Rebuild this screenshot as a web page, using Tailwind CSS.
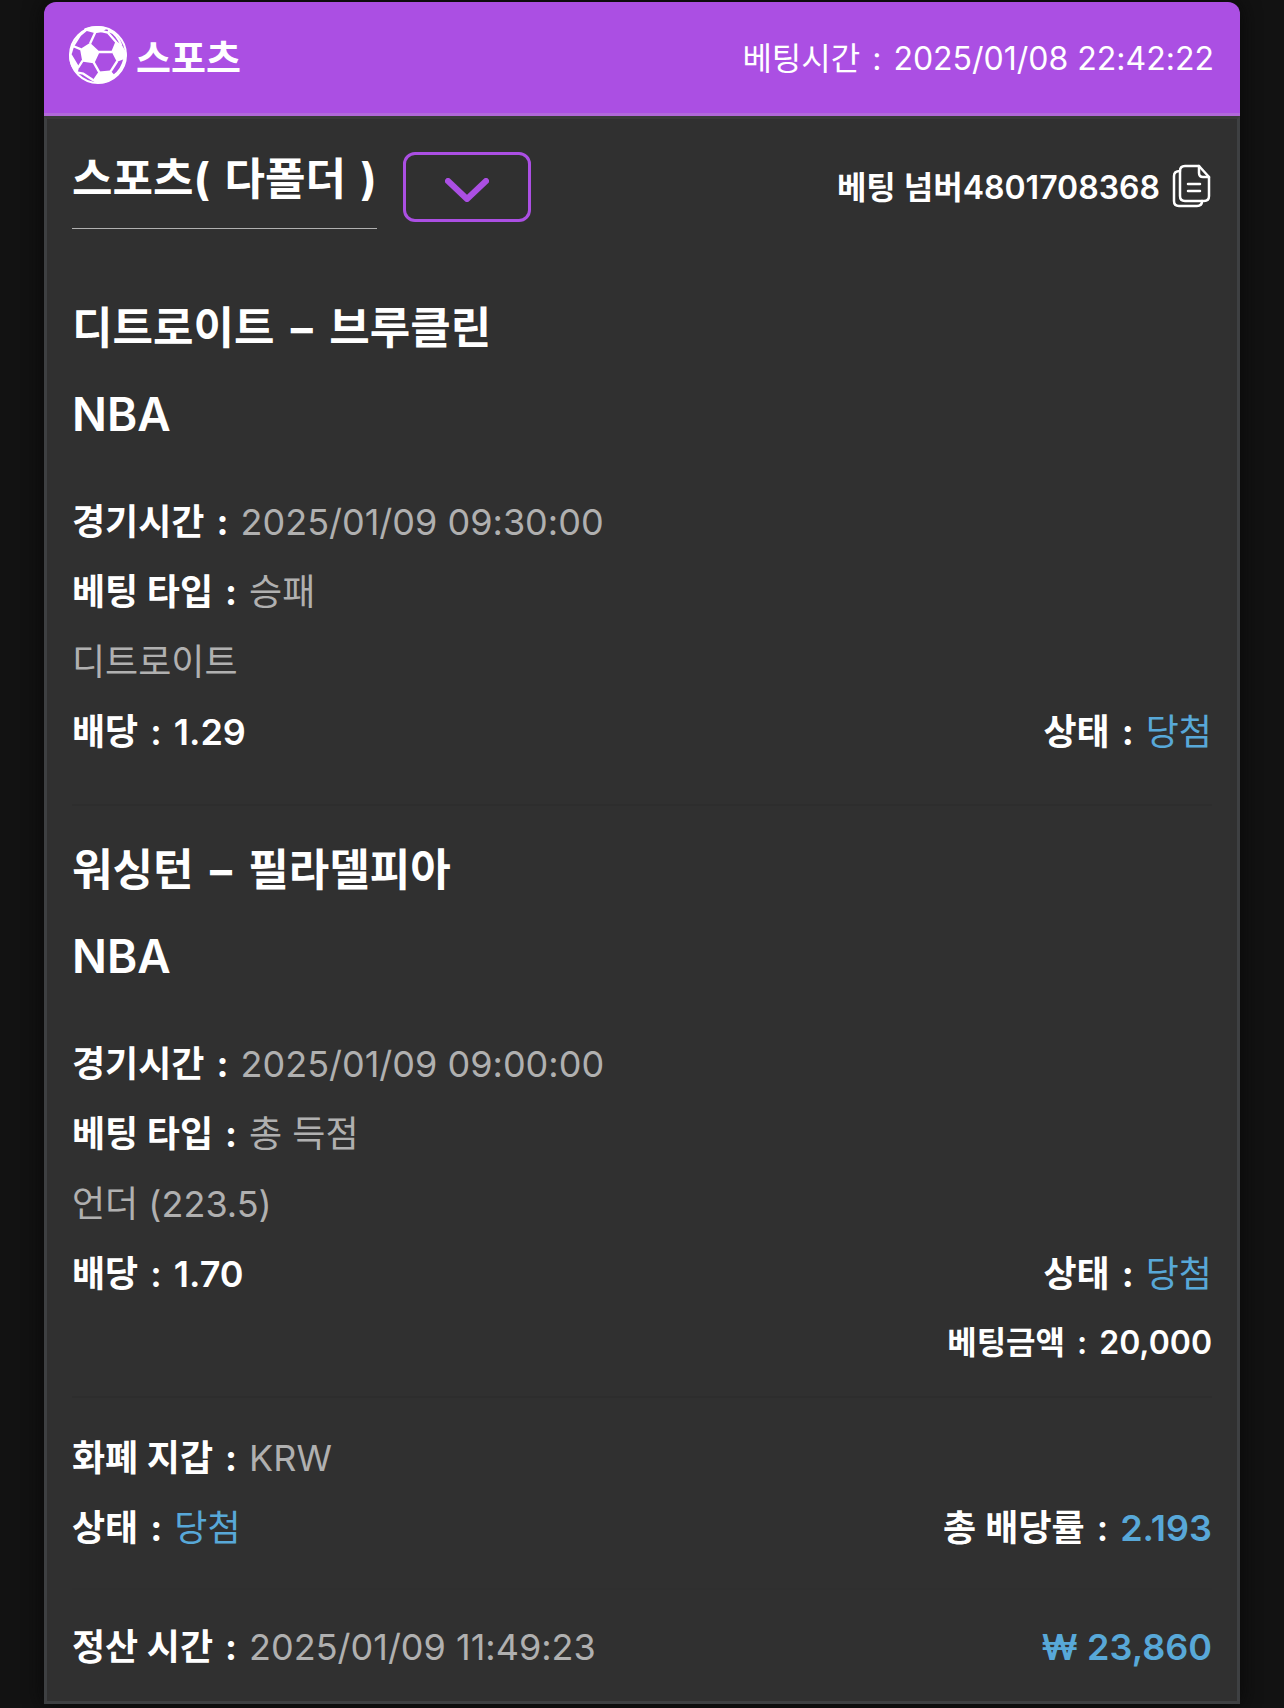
<!DOCTYPE html>
<html lang="ko">

<head>
    <meta charset="UTF-8">
    <meta name="viewport" content="width=device-width, initial-scale=1.0">
    <title>베팅 내역</title>
    <script src="https://cdn.jsdelivr.net/npm/@tailwindcss/browser@4"></script>
</head>

<body class="bg-[#121212] text-white font-['Inter','Noto_Sans_CJK_KR',sans-serif]">

    <main class="px-11 pt-[2px] pb-1">
        <article class="rounded-t-xl shadow-[0_0_20px_#080808]">
            <!-- Header -->
            <header class="flex items-center justify-between h-[114px] pl-6 pr-[26px] pb-1.5 bg-[#ab4fe3] border-b-3 border-[#b269da] rounded-t-xl">
                <div class="flex items-center gap-2">
                    <svg class="size-[60px]" viewBox="114 74 180 180" fill="none" stroke="#fff" stroke-width="7" stroke-linejoin="round">
                        <circle cx="204" cy="164" r="84" stroke-width="6" />
                        <path fill="#fff" d="M180 132L205 155L191 185L160 181L154 148Z" />
                        <path fill="#fff" d="M166 87Q196 76 226 84L214 92L194 95Z" />
                        <path fill="#fff" d="M259 126L274 138L286 158Q288 166 284 172L262 180L248 153Z" />
                        <path fill="#fff" d="M208 217L240 214L252 228Q232 246 204 246L192 240Z" />
                        <path fill="#fff" d="M121 162L144 200L140 214Q119 192 121 162Z" />
                        <path d="M180 130L196 96M206 155H247M191 186L208 216M158 181L145 201M153 147L129 137L122 160M129 137L150 104L170 88M214 92L234 97L259 126M234 90Q262 100 274 136M262 182L242 213M284 174Q276 210 250 228M140 216L160 220L190 240" />
                    </svg>
                    <h1 class="pt-2 text-[38px] font-bold">스포츠</h1>
                </div>
                <p class="pt-2 text-[32px]">베팅시간<span class="mx-3">:</span>2025/01/08 22:42:22</p>
            </header>

            <div class="px-[25px] pb-[19px] bg-[#303030] border-3 border-t-[#393939] border-[#3e4042] text-[36px] leading-[70px]">
                <!-- Bet type and number -->
                <div class="flex items-start justify-between pt-[10px] mb-14">
                    <div class="flex items-start gap-[26px]">
                        <h2 class="h-[100px] border-b border-[#b0b0b0] text-[44px] leading-[100px] font-bold">스포츠( <span class="mx-1">다폴더</span> )</h2>
                        <button type="button" aria-label="펼치기" class="flex items-center justify-center w-32 h-[70px] pt-1.5 mt-[23px] border-3 border-[#ab4fe3] rounded-xl">
                            <svg class="w-11 h-6" viewBox="0 0 44 24" fill="none" stroke="#ab4fe3" stroke-width="6" stroke-linecap="round" stroke-linejoin="round">
                                <path d="M3 3L22 21L41 3" />
                            </svg>
                        </button>
                    </div>
                    <div class="flex items-center gap-3 pt-6 text-[32px] font-semibold">
                        <span>베팅 넘버4801708368</span>
                        <button type="button" aria-label="복사" class="pb-1">
                            <svg class="w-10 h-11" viewBox="0 0 40 44" fill="none" stroke="#fff" stroke-width="2.5" stroke-linecap="round" stroke-linejoin="round">
                                <path d="M13 2H27L37 13V32Q37 37 32 37H13Q8 37 8 32V7Q8 2 13 2Z" />
                                <path d="M27 2V9Q27 13 31 13H37M8 7Q2 7 2 12V37Q2 42 7 42H25Q30 42 30 37M16 20H28M16 27H28" />
                            </svg>
                        </button>
                    </div>
                </div>

                <!-- Match 1 -->
                <section>
                    <h3 class="text-[44px] leading-[86px] font-bold">디트로이트 <span class="mx-1.5">–</span> 브루클린</h3>
                    <p class="mb-[30px] text-[46px] leading-[86px] font-semibold">NBA</p>
                    <p><b class="font-bold">경기시간<span class="mx-3">:</span></b><span class="text-[#b0b0b0]">2025/01/09 09:30:00</span></p>
                    <p><b class="font-bold">베팅 타입<span class="mx-3">:</span></b><span class="text-[#b0b0b0]">승패</span></p>
                    <p class="text-[#b0b0b0]">디트로이트</p>
                    <div class="flex justify-between">
                        <p class="font-semibold">배당<span class="mx-3">:</span>1.29</p>
                        <p><b class="font-bold">상태<span class="mx-3">:</span></b><span class="text-[#58a8d8]">당첨</span></p>
                    </div>
                </section>

                <hr class="mt-[37px] mb-[21px] border-t-2 border-[#2d2d2d]">

                <!-- Match 2 -->
                <section>
                    <h3 class="text-[44px] leading-[86px] font-bold">워싱턴 <span class="mx-1.5">–</span> 필라델피아</h3>
                    <p class="mb-[30px] text-[46px] leading-[86px] font-semibold">NBA</p>
                    <p><b class="font-bold">경기시간<span class="mx-3">:</span></b><span class="text-[#b0b0b0]">2025/01/09 09:00:00</span></p>
                    <p><b class="font-bold">베팅 타입<span class="mx-3">:</span></b><span class="text-[#b0b0b0]">총 득점</span></p>
                    <p class="text-[#b0b0b0]">언더 (223.5)</p>
                    <div class="flex justify-between">
                        <p class="font-semibold">배당<span class="mx-3">:</span>1.70</p>
                        <p><b class="font-bold">상태<span class="mx-3">:</span></b><span class="text-[#58a8d8]">당첨</span></p>
                    </div>
                    <p class="text-right text-[32px] leading-[68px] font-semibold">베팅금액<span class="mx-3">:</span>20,000</p>
                </section>

                <hr class="mt-[19px] mb-[25px] border-t-2 border-[#2d2d2d]">

                <!-- Wallet and total odds -->
                <section>
                    <p><b class="font-bold">화폐 지갑<span class="mx-3">:</span></b><span class="text-[#b0b0b0]">KRW</span></p>
                    <div class="flex justify-between">
                        <p><b class="font-bold">상태<span class="mx-3">:</span></b><span class="text-[#58a8d8]">당첨</span></p>
                        <p class="font-semibold">총 배당률<span class="mx-3">:</span><span class="text-[#58a8d8]">2.193</span></p>
                    </div>
                </section>

                <hr class="mt-[25px] mb-[22px] border-t-2 border-[#2f2f2f]">

                <!-- Settlement -->
                <div class="flex justify-between">
                    <p><b class="font-bold">정산 시간<span class="mx-3">:</span></b><span class="text-[#b0b0b0]">2025/01/09 11:49:23</span></p>
                    <p class="text-[#58a8d8] font-semibold">₩ 23,860</p>
                </div>
            </div>
        </article>
    </main>

</body>

</html>
